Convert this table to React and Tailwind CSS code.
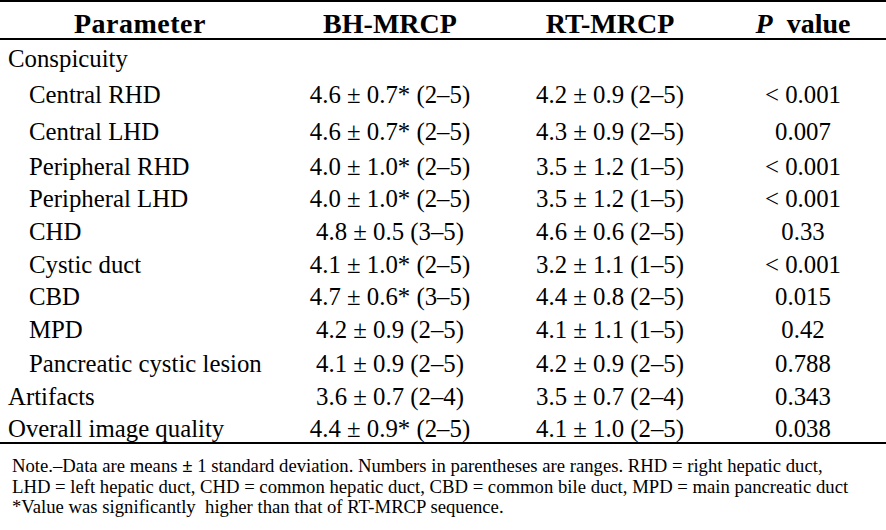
const rows = [
  { label: 'Conspicuity', indent: false, bh: '', rt: '', p: '', h: 'h-[36px]' },
  { label: 'Central RHD', indent: true, bh: '4.6 ± 0.7* (2–5)', rt: '4.2 ± 0.9 (2–5)', p: '< 0.001', h: 'h-[37px]' },
  { label: 'Central LHD', indent: true, bh: '4.6 ± 0.7* (2–5)', rt: '4.3 ± 0.9 (2–5)', p: '0.007', h: 'h-[35px]' },
  { label: 'Peripheral RHD', indent: true, bh: '4.0 ± 1.0* (2–5)', rt: '3.5 ± 1.2 (1–5)', p: '< 0.001', h: 'h-[32px]' },
  { label: 'Peripheral LHD', indent: true, bh: '4.0 ± 1.0* (2–5)', rt: '3.5 ± 1.2 (1–5)', p: '< 0.001', h: 'h-[33px]' },
  { label: 'CHD', indent: true, bh: '4.8 ± 0.5 (3–5)', rt: '4.6 ± 0.6 (2–5)', p: '0.33', h: 'h-[33px]' },
  { label: 'Cystic duct', indent: true, bh: '4.1 ± 1.0* (2–5)', rt: '3.2 ± 1.1 (1–5)', p: '< 0.001', h: 'h-[32px]' },
  { label: 'CBD', indent: true, bh: '4.7 ± 0.6* (3–5)', rt: '4.4 ± 0.8 (2–5)', p: '0.015', h: 'h-[33px]' },
  { label: 'MPD', indent: true, bh: '4.2 ± 0.9 (2–5)', rt: '4.1 ± 1.1 (1–5)', p: '0.42', h: 'h-[34px]' },
  { label: 'Pancreatic cystic lesion', indent: true, bh: '4.1 ± 0.9 (2–5)', rt: '4.2 ± 0.9 (2–5)', p: '0.788', h: 'h-[33px]' },
  { label: 'Artifacts', indent: false, bh: '3.6 ± 0.7 (2–4)', rt: '3.5 ± 0.7 (2–4)', p: '0.343', h: 'h-[32px]' },
  { label: 'Overall image quality', indent: false, bh: '4.4 ± 0.9* (2–5)', rt: '4.1 ± 1.0 (2–5)', p: '0.038', h: 'h-[25px]' },
];

const cols = 'grid grid-cols-[280px_220px_220px_166px]';

export default function App() {
  return (
    <div className="w-[886px] h-[530px] overflow-hidden bg-white text-black font-['Liberation_Serif','Times_New_Roman',serif]">
      <div className="border-t-2 border-black">
        <div className={`${cols} h-[36px] pt-[8px] text-[28px] leading-[28px] font-bold`}>
          <span className="text-center tracking-[0.5px]">Parameter</span>
          <span className="text-center">BH-MRCP</span>
          <span className="text-center">RT-MRCP</span>
          <span className="text-center">
            <i>P</i>&nbsp; value
          </span>
        </div>
      </div>

      <div className="border-t-2 border-b-2 border-black pt-[7px] text-[24.8px] leading-[24.5px]">
        {rows.map((row) => (
          <div key={row.label} className={`${cols} ${row.h} whitespace-nowrap`}>
            <span className={row.indent ? 'pl-[29px]' : 'pl-[8px]'}>{row.label}</span>
            <span className="text-center">{row.bh}</span>
            <span className="text-center">{row.rt}</span>
            <span className="text-center">{row.p}</span>
          </div>
        ))}
      </div>

      <div className="pl-[12px] pt-[12px] text-[18.7px] leading-[20.5px] whitespace-nowrap">
        <div>
          Note.–Data are means <b>±</b> 1 standard deviation. Numbers in parentheses are ranges. RHD = right hepatic duct,
        </div>
        <div>LHD = left hepatic duct, CHD = common hepatic duct, CBD = common bile duct, MPD = main pancreatic duct</div>
        <div>*Value was significantly&nbsp; higher than that of RT-MRCP sequence.</div>
      </div>
    </div>
  );
}
